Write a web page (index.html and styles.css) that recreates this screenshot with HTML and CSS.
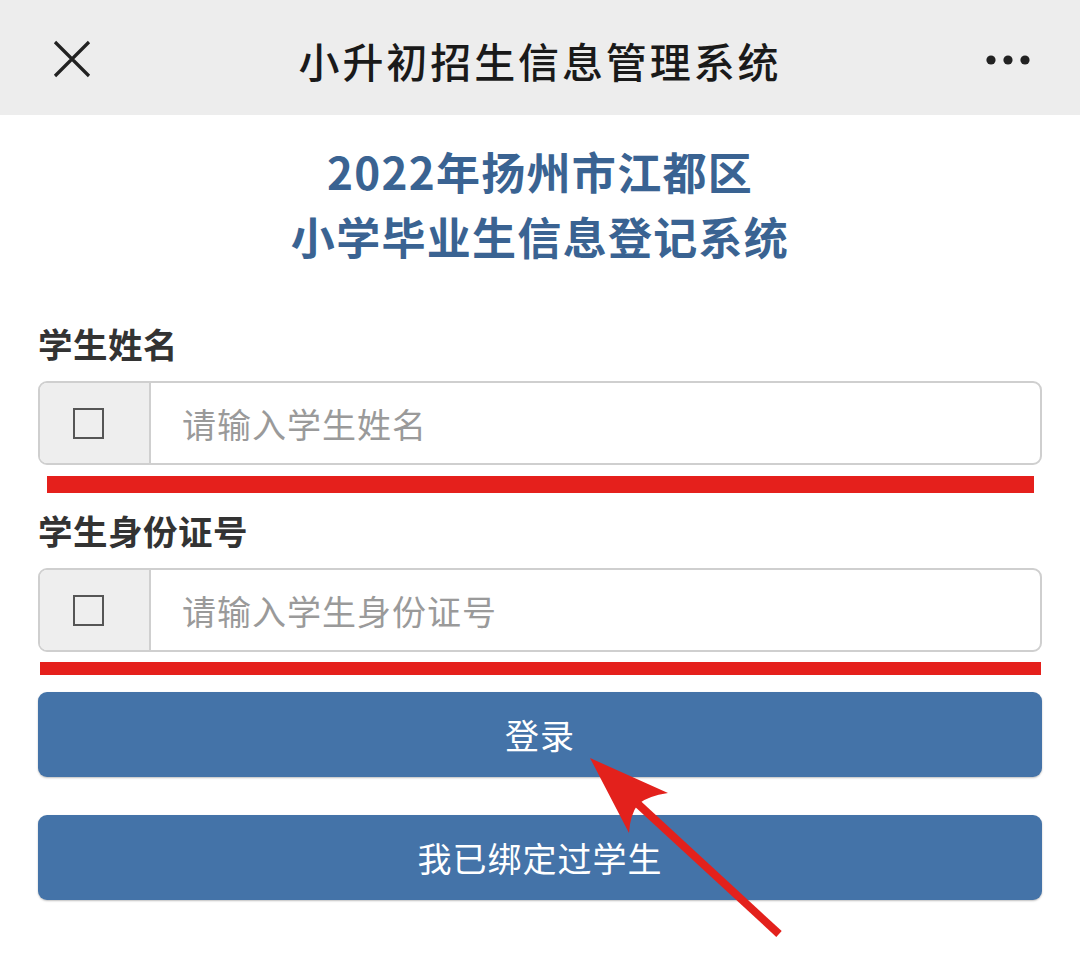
FILE: index.html
```html
<!DOCTYPE html>
<html lang="zh-CN">
<head>
<meta charset="utf-8">
<title>小升初招生信息管理系统</title>
<link rel="stylesheet" href="styles.css">
</head>
<body>
<header class="topbar">
  <svg class="close-icon" width="40" height="40" viewBox="0 0 40 40"><path d="M3 3 L37 37 M37 3 L3 37" stroke="#222" stroke-width="3.2" fill="none"/></svg>
  <div class="topbar-title">小升初招生信息管理系统</div>
  <svg class="more-icon" width="50" height="12" viewBox="0 0 50 12"><circle cx="7" cy="6" r="4.6" fill="#222"/><circle cx="24" cy="6" r="4.6" fill="#222"/><circle cx="41" cy="6" r="4.6" fill="#222"/></svg>
</header>
<main class="content">
  <h1 class="page-title">2022年扬州市江都区<br>小学毕业生信息登记系统</h1>
  <div class="field">
    <label class="field-label">学生姓名</label>
    <div class="input-group">
      <span class="addon"><span class="check"></span></span>
      <span class="input-text">请输入学生姓名</span>
    </div>
    <div class="mark mark-1"></div>
  </div>
  <div class="field field-2">
    <label class="field-label">学生身份证号</label>
    <div class="input-group">
      <span class="addon"><span class="check"></span></span>
      <span class="input-text">请输入学生身份证号</span>
    </div>
    <div class="mark mark-2"></div>
  </div>
  <button class="btn btn-login">登录</button>
  <button class="btn btn-bound">我已绑定过学生</button>
</main>
<svg class="arrow" width="1080" height="966" viewBox="0 0 1080 966">
  <line x1="626" y1="793" x2="779" y2="934" stroke="#e3211c" stroke-width="8"/>
  <path d="M590 758 L668 793 Q648 796 638 804 Q630 815 629 833 Z" fill="#e3211c"/>
</svg>
</body>
</html>
```
FILE: styles.css
```css
* { box-sizing: border-box; }
html, body { margin: 0; padding: 0; background: #fff; }
body {
  width: 1080px;
  height: 966px;
  position: relative;
  overflow: hidden;
  font-family: "Noto Sans CJK SC", "Noto Sans", sans-serif;
}
.topbar {
  height: 115px;
  background: #ededed;
  display: flex;
  align-items: center;
  justify-content: space-between;
  padding: 0 46px 0 52px;
}
.close-icon { display: block; margin-top: 2px; }
.topbar-title {
  font-size: 41px;
  color: #1a1a1a;
  letter-spacing: 2.9px;
  font-weight: 500;
  margin-left: 4px;
  margin-top: 4px;
}
.more-icon { display: block; margin-top: 4px; }
.content {
  padding: 0 38px;
}
.page-title {
  margin: 24px 0 0;
  text-align: center;
  font-size: 44px;
  line-height: 65px;
  font-weight: 700;
  color: #3a6392;
  letter-spacing: 1.3px;
}
.field { margin-top: 54px; }
.field-2 { margin-top: 17px; }
.field-label {
  display: block;
  font-size: 34.5px;
  line-height: 40px;
  font-weight: 700;
  color: #333;
  letter-spacing: 0.5px;
}
.input-group {
  margin-top: 18px;
  height: 84px;
  border: 2px solid #cfcfcf;
  border-radius: 9px;
  display: flex;
  align-items: stretch;
  overflow: hidden;
  background: #fff;
}
.addon {
  width: 111px;
  background: #eeeeee;
  border-right: 2px solid #cfcfcf;
  display: flex;
  align-items: center;
  padding-left: 33px;
}
.check {
  width: 31px;
  height: 31px;
  border: 2px solid #555;
  display: block;
}
.input-text {
  display: flex;
  align-items: center;
  padding-left: 31px;
  font-size: 34px;
  color: #9a9a9a;
  letter-spacing: 1px;
}
.mark { background: #e5201c; }
.mark-1 { height: 17px; margin: 11px 8px 0 9px; }
.mark-2 { height: 13px; margin: 10px 1px 0 2px; }
.btn {
  display: block;
  width: 100%;
  height: 85px;
  border: none;
  border-radius: 9px;
  background: #4473a8;
  color: #fff;
  font-family: "Noto Sans CJK SC", "Noto Sans", sans-serif;
  font-size: 34px;
  letter-spacing: 1px;
  box-shadow: 0 1px 2px rgba(0,0,0,0.25);
  padding: 0;
}
.btn-login { margin-top: 17px; }
.btn-bound { margin-top: 38px; }
.arrow {
  position: absolute;
  left: 0;
  top: 0;
  pointer-events: none;
}
```
